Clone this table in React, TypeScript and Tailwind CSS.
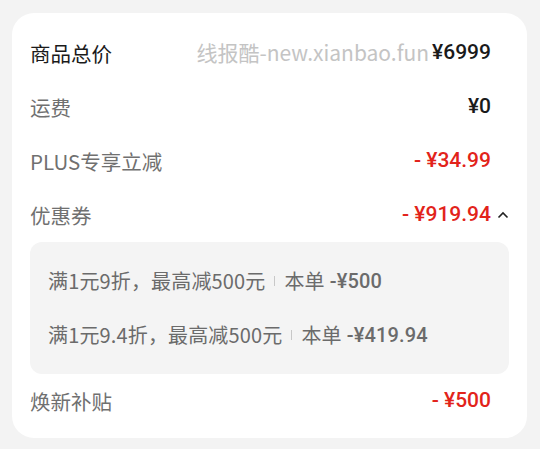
const font = { fontFamily: '"Noto Sans CJK SC", "Noto Sans", sans-serif' };
const num = { fontFamily: 'Roboto, "Noto Sans CJK SC", sans-serif' };

function Row({
  label,
  value,
  dark,
  red,
  extra,
  chevron,
}: {
  label: string;
  value: string;
  dark?: boolean;
  red?: boolean;
  extra?: React.ReactNode;
  chevron?: boolean;
}) {
  return (
    <div className="flex h-[54px] items-center">
      <span className={`text-[20.5px] ${dark ? "text-[#1a1a1a]" : "text-[#707070]"}`}>{label}</span>
      <div className="ml-auto flex items-center">
        {extra}
        <span
          className={`text-[21px] font-medium ${red ? "text-[#e2231a]" : "text-[#1a1a1a]"}`}
          style={num}
        >
          {value}
        </span>
        <span className="flex w-[18px] justify-end">
          {chevron ? (
            <svg width="12" height="8" viewBox="0 0 12 8" fill="none">
              <path d="M1.5 6.5 6 2l4.5 4.5" stroke="#222" strokeWidth="1.6" />
            </svg>
          ) : null}
        </span>
      </div>
    </div>
  );
}

function Coupon({ text, amount }: { text: string; amount: string }) {
  return (
    <div className="flex h-[54px] items-center text-[20px] tracking-[0.15px] text-[#6b6b6b]">
      <span>{text}</span>
      <span className="mx-[9px] h-[10px] w-px bg-[#c8c8c8]" />
      <span>本单</span>
      <span className="ml-[5px] font-medium" style={num}>
        {amount}
      </span>
    </div>
  );
}

export default function App() {
  return (
    <div className="min-h-[449px] bg-[#f3f3f3] pl-[12px] pr-[13px] pt-[13px]" style={font}>
      <div className="rounded-[22px] bg-white px-[18px] pb-[10px] pt-[13px]">
        <Row
          label="商品总价"
          value="¥6999"
          dark
          extra={<span className="mr-[3px] text-[21px] text-[#c4c4c4]">线报酷-new.xianbao.fun</span>}
        />
        <Row label="运费" value="¥0" />
        <Row label="PLUS专享立减" value="- ¥34.99" red />
        <Row label="优惠券" value="- ¥919.94" red chevron />
        <div className="rounded-[12px] bg-[#f4f4f4] px-[18px] py-[12px]">
          <Coupon text="满1元9折，最高减500元" amount="-¥500" />
          <Coupon text="满1元9.4折，最高减500元" amount="-¥419.94" />
        </div>
        <Row label="焕新补贴" value="- ¥500" red />
      </div>
    </div>
  );
}
